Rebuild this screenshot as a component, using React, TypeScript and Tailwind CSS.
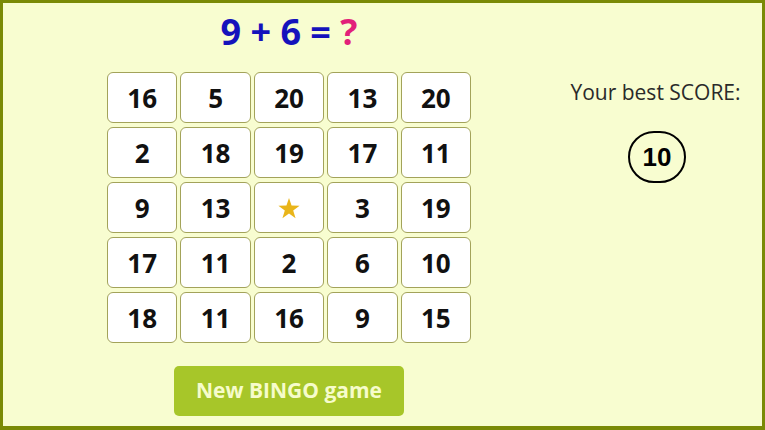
const board = [
  [16, 5, 20, 13, 20],
  [2, 18, 19, 17, 11],
  [9, 13, 0, 3, 19],
  [17, 11, 2, 6, 10],
  [18, 11, 16, 9, 15],
];

function Star() {
  return (
    <svg width="22" height="21" viewBox="0 0 24 23">
      <polygon
        points="12,0 14.8,8.3 23.6,8.4 16.6,13.7 19.2,22.2 12,17.1 4.8,22.2 7.4,13.7 0.4,8.4 9.2,8.3"
        fill="#e9b51a"
      />
    </svg>
  );
}

export default function App() {
  return (
    <div className="w-[765px] h-[430px] bg-[#f8fdd0] border-[3px] border-b-4 border-[#7a8a06] flex font-[family-name:'Open_Sans',sans-serif]">
      {/* Left: equation, board, button */}
      <div className="ml-[104px] w-[364px] flex flex-col items-center">
        <div className="mt-[6px] h-[46px] leading-[46px] text-[36px] font-bold text-[#1512bc] whitespace-pre">
          9 + 6 = <span className="text-[#e2207a]">?</span>
        </div>

        <div className="mt-[17px] grid grid-cols-5 gap-x-[3px] gap-y-[4px] w-[364px]">
          {board.flat().map((n, i) => (
            <div
              key={i}
              className="h-[51px] bg-white border border-[#a3a35a] rounded-[6px] flex items-center justify-center pt-[2px] text-[26px] font-bold text-[#111]"
            >
              {n === 0 ? <Star /> : n}
            </div>
          ))}
        </div>

        <button className="mt-[23px] w-[230px] h-[50px] rounded-[5px] bg-[#a7c629] text-[#f6fccb] text-[21px] font-bold">
          New BINGO game
        </button>
      </div>

      {/* Right: best score */}
      <div className="flex-1 flex flex-col items-center pl-[78px]">
        <div className="mt-[76px] text-[21px] leading-[26px] text-[#2a2a2a] whitespace-nowrap">Your best SCORE:</div>
        <div className="mt-[26px] ml-[3px] w-[58px] h-[52px] rounded-full border-2 border-black flex items-center justify-center">
          <span className="[font-family:'Liberation_Sans',Arial,sans-serif] font-bold text-[26px] leading-none text-black">10</span>
        </div>
      </div>
    </div>
  );
}
